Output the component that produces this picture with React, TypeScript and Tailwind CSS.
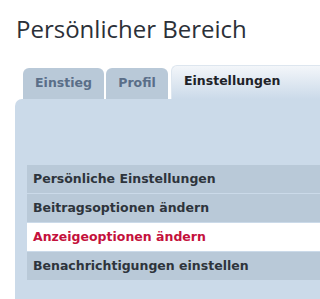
import React from 'react';

const items = [
  { label: 'Persönliche Einstellungen', active: false },
  { label: 'Beitragsoptionen ändern', active: false },
  { label: 'Anzeigeoptionen ändern', active: true },
  { label: 'Benachrichtigungen einstellen', active: false },
];

const App: React.FC = () => {
  return (
    <div className="w-full h-[299px] bg-white overflow-hidden">
      <h1 className="pl-4 pt-[13px] text-[24px] leading-[32px] text-[#2b3038] font-['Open_Sans',sans-serif]">
        Persönlicher Bereich
      </h1>

      <div className="mt-[20px] flex items-end pl-[23px] font-['DejaVu_Sans',sans-serif] text-[12.5px] font-bold">
        <div className="w-[81px] h-[31px] mr-[2px] flex items-center justify-center rounded-t-[6px] bg-[#b9c9d8] text-[#5a6e88]">
          Einstieg
        </div>
        <div className="w-[62px] h-[31px] mr-[3px] flex items-center justify-center rounded-t-[6px] bg-[#b9c9d8] text-[#5a6e88]">
          Profil
        </div>
        <div className="flex-1 h-[34px] pl-[12px] pb-[3px] flex items-center rounded-tl-[6px] border-t border-l border-[#dde6ef] bg-gradient-to-b from-[#f3f6fa] to-[#cbdae9] text-[#1e2228] whitespace-nowrap">
          Einstellungen
        </div>
      </div>

      <div className="ml-[15px] h-[200px] rounded-tl-[7px] bg-[#cbdae9] pt-[66px] pl-[12px]">
        <div className="flex flex-col gap-px font-['DejaVu_Sans',sans-serif] text-[12.5px] font-bold">
          {items.map((item) => (
            <div
              key={item.label}
              className={`h-[28px] pl-[6px] flex items-center whitespace-nowrap ${
                item.active ? 'bg-white text-[#c4113c]' : 'bg-[#b9c9d8] text-[#2e343c]'
              }`}
            >
              {item.label}
            </div>
          ))}
        </div>
      </div>
    </div>
  );
};

export default App;
